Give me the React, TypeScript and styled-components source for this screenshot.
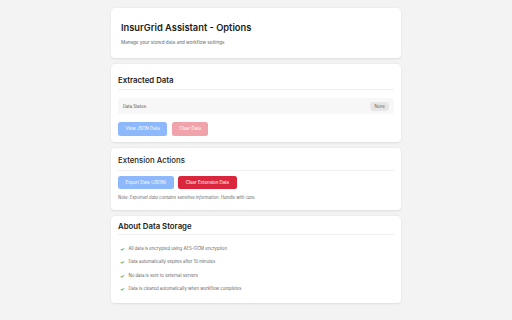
import React from "react";
import styled, { createGlobalStyle } from "styled-components";

const Global = createGlobalStyle`
  html, body { margin: 0; padding: 0; background: #f3f3f3; }
  body { font-family: Inter, "Liberation Sans", sans-serif; color: #222; }
`;

const Page = styled.div`
  width: 290px;
  margin: 0 auto;
  padding: 8px 0 16px;
  display: flex;
  flex-direction: column;
  gap: 6px;
`;

const Card = styled.section<{ $pad: string }>`
  background: #fff;
  border-radius: 4px;
  box-shadow: 0 0.5px 2px rgba(0, 0, 0, 0.09);
  padding: ${(p) => p.$pad};
  display: flex;
  flex-direction: column;
`;

const Title = styled.h1`
  margin: 0;
  font-size: 9.3px;
  font-weight: 600;
  color: #1b1b1b;
  line-height: 12px;
`;

const Subtitle = styled.p`
  margin: 6px 0 0;
  font-size: 4.6px;
  color: #666;
  line-height: 6px;
`;

const SectionTitle = styled.h2<{ $weight?: number; $pb: number }>`
  margin: 0;
  font-size: 7.8px;
  font-weight: ${(p) => p.$weight || 600};
  color: #1b1b1b;
  line-height: 10px;
  padding-bottom: ${(p) => p.$pb}px;
  border-bottom: 1px solid #f0f0f0;
`;

const StatusRow = styled.div`
  margin-top: 8px;
  background: #f7f7f7;
  border-radius: 3px;
  height: 16px;
  padding: 0 5px;
  display: flex;
  align-items: center;
  justify-content: space-between;
`;

const StatusLabel = styled.span`
  font-size: 4.2px;
  color: #555;
`;

const Badge = styled.span`
  background: #e6e6e6;
  border-radius: 4px;
  font-size: 4.2px;
  color: #666;
  padding: 2px 4px;
`;

const ButtonRow = styled.div<{ $mt: number }>`
  display: flex;
  gap: 4.5px;
  margin-top: ${(p) => p.$mt}px;
`;

const Button = styled.button<{ $tone: "blue" | "pink" | "red" }>`
  border: none;
  border-radius: 2.5px;
  height: 13.5px;
  padding: 0 7.5px;
  font-family: inherit;
  font-size: 4.4px;
  color: #fff;
  background: ${(p) =>
    p.$tone === "blue" ? "#8db8fb" : p.$tone === "pink" ? "#f0a3aa" : "#d9263c"};
`;

const Note = styled.p`
  margin: 6px 0 0;
  font-size: 4.2px;
  line-height: 6px;
  font-style: italic;
  color: #666;
`;

const List = styled.ul`
  list-style: none;
  margin: 11px 0 0;
  padding: 0;
  display: flex;
  flex-direction: column;
  gap: 7.3px;
`;

const Item = styled.li`
  display: flex;
  align-items: center;
  gap: 4px;
  font-size: 4.3px;
  color: #666;
  line-height: 6px;
  padding-left: 2px;
`;

const Check = styled.span`
  color: #3aa35a;
  font-size: 5px;
  font-weight: 700;
`;

const items = [
  "All data is encrypted using AES-GCM encryption",
  "Data automatically expires after 10 minutes",
  "No data is sent to external servers",
  "Data is cleared automatically when workflow completes",
];

export default function App() {
  return (
    <>
      <Global />
      <Page>
        <Card $pad="14px 10px 12px">
          <Title>InsurGrid Assistant - Options</Title>
          <Subtitle>Manage your stored data and workflow settings</Subtitle>
        </Card>
        <Card $pad="11px 7px 6px">
          <SectionTitle $pb={4}>Extracted Data</SectionTitle>
          <StatusRow>
            <StatusLabel>Data Status:</StatusLabel>
            <Badge>None</Badge>
          </StatusRow>
          <ButtonRow $mt={8}>
            <Button $tone="blue">View JSON Data</Button>
            <Button $tone="pink">Clear Data</Button>
          </ButtonRow>
        </Card>
        <Card $pad="7px 7px 9px">
          <SectionTitle $weight={500} $pb={5}>Extension Actions</SectionTitle>
          <ButtonRow $mt={5}>
            <Button $tone="blue">Export Data (JSON)</Button>
            <Button $tone="red">Clear Extension Data</Button>
          </ButtonRow>
          <Note>Note: Exported data contains sensitive information. Handle with care.</Note>
        </Card>
        <Card $pad="5px 7px 11px">
          <SectionTitle $pb={3}>About Data Storage</SectionTitle>
          <List>
            {items.map((t) => (
              <Item key={t}>
                <Check>✓</Check>
                {t}
              </Item>
            ))}
          </List>
        </Card>
      </Page>
    </>
  );
}
